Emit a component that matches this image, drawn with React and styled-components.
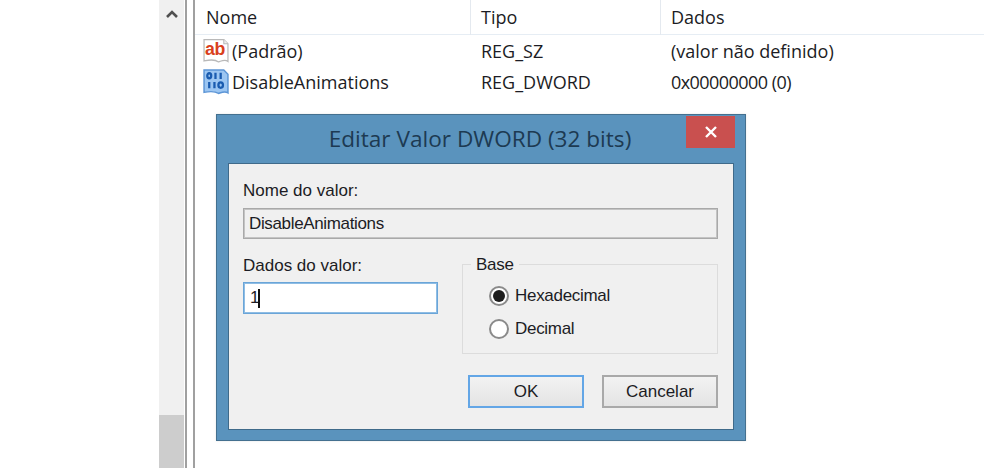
import React from "react";
import styled, { createGlobalStyle } from "styled-components";

const Global = createGlobalStyle`
  html, body { margin: 0; padding: 0; background: #fff; overflow: hidden; }
  #root { width: 984px; height: 468px; }
`;

const Page = styled.div`
  position: relative;
  width: 984px;
  height: 468px;
  display: flex;
  padding-left: 159px;
  box-sizing: border-box;
  background: #fff;
  overflow: hidden;
`;

const Scrollbar = styled.div`
  width: 25px;
  height: 100%;
  background: #f0f0f0;
  display: flex;
  flex-direction: column;
  justify-content: space-between;
`;
const ArrowCell = styled.div`
  height: 28px;
  display: flex;
  align-items: center;
  justify-content: center;
`;
const Thumb = styled.div`
  height: 53px;
  background: #cdcdcd;
`;
const Frame = styled.div`
  width: 10px;
  height: 100%;
  margin-left: 1px;
  border-left: 2px solid #a0a0a0;
  border-right: 2px solid #a0a0a0;
  box-sizing: border-box;
  background: #fff;
`;

const List = styled.div`
  flex: 1;
  font-family: "Open Sans", "Noto Sans", sans-serif;
  font-size: 18px;
  color: #1c1c24;
`;
const HeaderRow = styled.div`
  height: 35px;
  display: grid;
  grid-template-columns: 276px 190px 1fr;
  border-bottom: 1px solid #e6edf4;
  box-sizing: border-box;
`;
const HeaderCell = styled.div`
  display: flex;
  align-items: center;
  height: 35px;
  padding: 0 0 2px ${p => p.$pad}px;
  box-sizing: border-box;
  border-right: 1px solid #e4e9ef;
  &:last-child { border-right: none; }
`;
const Row = styled.div`
  height: 31px;
  display: grid;
  grid-template-columns: 276px 190px 1fr;
  align-items: center;
`;
const NameCell = styled.div`
  display: flex;
  align-items: center;
  gap: 3px;
  padding-left: 8px;
`;
const Cell = styled.div`
  padding-left: 10px;
  letter-spacing: ${p => (p.$tight ? "-0.55px" : "0")};
`;

const Dialog = styled.div`
  position: absolute;
  left: 216px;
  top: 114px;
  width: 530px;
  height: 327px;
  box-sizing: border-box;
  background: #5a93bd;
  border: 1px solid #44708f;
  box-shadow: 0 0 2px rgba(200, 200, 200, 0.5);
  display: flex;
  flex-direction: column;
  padding: 0 11px 10px 11px;
`;
const TitleBar = styled.div`
  height: 48px;
  flex: none;
  display: flex;
  justify-content: center;
  align-items: center;
  padding: 0 2px 1px 0;
  box-sizing: border-box;
  position: relative;
  font-family: "Open Sans", "Noto Sans", sans-serif;
  font-size: 22.6px;
  color: #1d3a52;
`;
const CloseButton = styled.div`
  position: absolute;
  right: -1px;
  top: 1px;
  width: 49px;
  height: 32px;
  background: #c9504f;
  display: flex;
  align-items: center;
  justify-content: center;
`;
const Client = styled.div`
  flex: 1;
  background: #f0f0f0;
  border: 1px solid #3f6a8a;
  padding: 15px 15px 0 14px;
  font-family: "Liberation Sans", Arial, sans-serif;
  font-size: 17px;
  color: #1c1c24;
  display: flex;
  flex-direction: column;
  letter-spacing: -0.3px;
`;
const Label = styled.div`
  height: 24px;
  line-height: 24px;
  letter-spacing: 0;
`;
const ReadOnlyField = styled.div`
  height: 31px;
  margin-top: 5px;
  border: 1px solid #a9a9a9;
  box-shadow: inset 0 0 0 1px #c4c4c4;
  box-sizing: border-box;
  background: #f0f0f0;
  padding-left: 5px;
  display: flex;
  align-items: center;
  letter-spacing: -0.35px;
`;
const Middle = styled.div`
  display: flex;
  justify-content: space-between;
  margin-top: 15px;
`;
const DataColumn = styled.div`
  width: 195px;
`;
const DataInput = styled.div`
  height: 32px;
  margin-top: 4px;
  border: 1px solid #6aa5d8;
  box-shadow: inset 0 0 0 1px #8fbde4;
  box-sizing: border-box;
  background: #fff;
  padding-left: 6px;
  display: flex;
  align-items: center;
`;
const Caret = styled.span`
  width: 1.5px;
  height: 19px;
  background: #111;
  margin-left: -1px;
`;
const RightColumn = styled.div`
  width: 256px;
`;
const GroupBox = styled.div`
  position: relative;
  height: 90px;
  margin-top: 10px;
  border: 1px solid #dcdcdc;
  box-sizing: border-box;
  padding: 21px 0 0 26px;
  display: flex;
  flex-direction: column;
  gap: 13px;
`;
const GroupLegend = styled.span`
  position: absolute;
  left: 8px;
  top: -10px;
  background: #f0f0f0;
  padding: 0 5px;
  line-height: 20px;
`;
const RadioRow = styled.div`
  display: flex;
  align-items: center;
  gap: 6px;
  height: 20px;
`;
const Radio = styled.span`
  width: 20px;
  height: 20px;
  flex: none;
  box-sizing: border-box;
  border-radius: 50%;
  border: 2px solid #8a8a8a;
  background: #fff;
  display: flex;
  align-items: center;
  justify-content: center;
  &::after {
    content: "";
    width: 12px;
    height: 12px;
    border-radius: 50%;
    background: ${p => (p.$checked ? "#1e1e1e" : "transparent")};
  }
`;
const Buttons = styled.div`
  display: flex;
  justify-content: flex-end;
  gap: 18px;
  margin-top: 21px;
`;
const Button = styled.div`
  width: 116px;
  height: 33px;
  box-sizing: border-box;
  border: 2px solid ${p => (p.$primary ? "#63a6e6" : "#a9a9a9")};
  background: linear-gradient(#f2f2f2, #e4e4e4);
  display: flex;
  align-items: center;
  justify-content: center;
  letter-spacing: 0;
`;

const AbIcon = () => (
  <svg width="26" height="26" viewBox="1 1 25 25">
    <path d="M2 2.5h19l4 4v17c-3-2.5-6-.5-9 .5-4-3-9-2-14-1z" fill="#fff" stroke="#b9b9b9" strokeWidth="1.2" />
    <path d="M21 2.5v4h4" fill="#eee" stroke="#b9b9b9" strokeWidth="1" />
    <text x="3" y="17.5" fontFamily="Liberation Sans, sans-serif" fontWeight="700" fontSize="17" letterSpacing="-0.4" fill="#d9401c">ab</text>
  </svg>
);

const BinIcon = () => (
  <svg width="26" height="26" viewBox="1 1 25 25">
    <path d="M2 2h19l4 4v18c-3-2-6-.5-9 .5-4-2.5-9-2-14-1z" fill="#9cc6f2" stroke="#5c95d6" strokeWidth="1.4" />
    <g fill="none" stroke="#1a5cb0" strokeWidth="2.2">
      <ellipse cx="7" cy="7.5" rx="1.9" ry="2.4" />
      <path d="M13 4.5v6M18 4.5v6" />
      <path d="M7 13.5v6M12 13.5v6" />
      <ellipse cx="18" cy="16.5" rx="2.2" ry="2.6" />
    </g>
  </svg>
);

export default function App() {
  return (
    <Page>
      <Global />
      <Scrollbar>
        <ArrowCell>
          <svg width="14" height="10" viewBox="0 0 14 10">
            <path d="M2 8l5-5 5 5" fill="none" stroke="#505050" strokeWidth="2.6" />
          </svg>
        </ArrowCell>
        <Thumb />
      </Scrollbar>
      <Frame />
      <List>
        <HeaderRow>
          <HeaderCell $pad={11}>Nome</HeaderCell>
          <HeaderCell $pad={10}>Tipo</HeaderCell>
          <HeaderCell $pad={10}>Dados</HeaderCell>
        </HeaderRow>
        <Row>
          <NameCell><AbIcon />(Padrão)</NameCell>
          <Cell>REG_SZ</Cell>
          <Cell>(valor não definido)</Cell>
        </Row>
        <Row>
          <NameCell><BinIcon />DisableAnimations</NameCell>
          <Cell>REG_DWORD</Cell>
          <Cell $tight>0x00000000 (0)</Cell>
        </Row>
      </List>

      <Dialog>
        <TitleBar>
          Editar Valor DWORD (32 bits)
          <CloseButton>
            <svg width="14" height="14" viewBox="0 0 14 14">
              <path d="M2 2l10 10M12 2L2 12" stroke="#fff" strokeWidth="2.4" />
            </svg>
          </CloseButton>
        </TitleBar>
        <Client>
          <Label>Nome do valor:</Label>
          <ReadOnlyField>DisableAnimations</ReadOnlyField>
          <Middle>
            <DataColumn>
              <Label>Dados do valor:</Label>
              <DataInput>1<Caret /></DataInput>
            </DataColumn>
            <RightColumn>
              <GroupBox>
                <GroupLegend>Base</GroupLegend>
                <RadioRow><Radio $checked />Hexadecimal</RadioRow>
                <RadioRow><Radio />Decimal</RadioRow>
              </GroupBox>
              <Buttons>
                <Button $primary>OK</Button>
                <Button>Cancelar</Button>
              </Buttons>
            </RightColumn>
          </Middle>
        </Client>
      </Dialog>
    </Page>
  );
}
